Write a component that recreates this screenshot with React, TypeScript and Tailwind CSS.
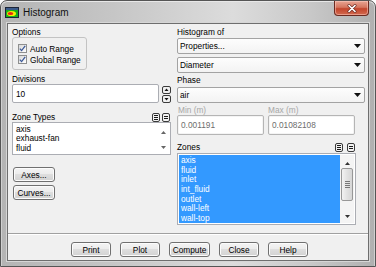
import React from "react";

const font = "font-['Liberation_Sans',Arial,sans-serif]";

function Check({ label }: { label: string }) {
  return (
    <div className="flex items-center h-[11px]">
      <div className="w-[9px] h-[9px] border border-[#8e8f8f] bg-[linear-gradient(135deg,#d8d8d8,#ffffff)] flex items-center justify-center">
        <svg width="7" height="7" viewBox="0 0 7 7">
          <path d="M0.8 3.6 L2.6 5.6 L6.2 0.9" stroke="#3b5999" strokeWidth="1.3" fill="none" />
        </svg>
      </div>
      <span className="ml-[3px] leading-[10px]">{label}</span>
    </div>
  );
}

function Dropdown({ text }: { text: string }) {
  return (
    <div className="h-[16px] border border-[#a3a3a3] rounded-[2px] bg-[linear-gradient(#fdfdfd,#f3f3f3)] flex items-center justify-between pl-[2px] pr-[3px]">
      <span className="leading-[10px]">{text}</span>
      <svg width="7" height="4" viewBox="0 0 7 4">
        <path d="M0 0 H7 L3.5 4 Z" fill="#111" />
      </svg>
    </div>
  );
}

function Btn({ children, className }: { children: React.ReactNode; className: string }) {
  return (
    <div
      className={
        "h-[15px] border border-[#707070] rounded-[3px] flex items-center justify-center leading-[10px] bg-[linear-gradient(#f4f4f4_0%,#ececec_45%,#dedede_50%,#d2d2d2_100%)] shadow-[inset_0_0_0_1px_#fcfcfc] " +
        className
      }
    >
      {children}
    </div>
  );
}

function SelIcon({ lines }: { lines: number }) {
  return (
    <svg width="8" height="9" viewBox="0 0 8 9">
      <rect x="0.5" y="0.5" width="7" height="8" rx="1.5" fill="#f2f2f2" stroke="#3a3a3a" />
      {lines === 3 ? (
        <path d="M2 2.5H6M2 4.5H6M2 6.5H6" stroke="#1a1a1a" strokeWidth="1" />
      ) : (
        <path d="M2 3.5H6M2 5.5H6" stroke="#1a1a1a" strokeWidth="1" />
      )}
    </svg>
  );
}

function Spin({ up }: { up: boolean }) {
  return (
    <svg width="9" height="8" viewBox="0 0 9 8">
      <rect x="0.5" y="0.5" width="8" height="7" rx="1.5" fill="#f0f0f0" stroke="#3a3a3a" />
      {up ? <path d="M2.5 5 H6.5 L4.5 2.6 Z" fill="#111" /> : <path d="M2.5 3 H6.5 L4.5 5.4 Z" fill="#111" />}
    </svg>
  );
}

function SmallArrow({ up, color }: { up: boolean; color: string }) {
  return (
    <svg width="5" height="3" viewBox="0 0 5 3">
      {up ? <path d="M0 3 H5 L2.5 0 Z" fill={color} /> : <path d="M0 0 H5 L2.5 3 Z" fill={color} />}
    </svg>
  );
}

export default function App() {
  const zones = ["axis", "fluid", "inlet", "int_fluid", "outlet", "wall-left", "wall-top"];
  const types = ["axis", "exhaust-fan", "fluid"];
  return (
    <div className={"w-[376px] h-[267px] " + font + " text-[8.3px] text-black"}>
      <div className="w-[376px] h-[267px] flex flex-col border border-[#555555] rounded-t-[7px] bg-[linear-gradient(90deg,#b4b4b4_0%,#c6c6c6_30%,#dcdcdc_62%,#c9c9c9_82%,#b0b0b0_100%)] shadow-[inset_0_1px_0_#e8e8e8,inset_1px_0_0_#d0d0d0,inset_-1px_0_0_#d0d0d0]">
        {/* title bar */}
        <div className="h-[22px] flex items-center">
          <div className="ml-[4px] mt-[1px]">
            <svg width="14" height="11" viewBox="0 0 14 11">
              <rect x="0" y="0" width="14" height="11" fill="#1c2436" />
              <rect x="1" y="1" width="12" height="2" fill="#3a5a8a" />
              <rect x="1" y="3" width="12" height="7" fill="#18b018" />
              <ellipse cx="6.5" cy="6.5" rx="4.5" ry="2.6" fill="#f4f000" />
              <ellipse cx="5.5" cy="6.5" rx="2.8" ry="1.6" fill="#e82810" />
            </svg>
          </div>
          <span className="ml-[4px] text-[10px] leading-[12px] mt-[1px] text-[#111]">Histogram</span>
          <div className="ml-auto mr-[6px] self-start w-[35px] h-[15px] rounded-b-[4px] border border-t-0 border-[#6b2a20] bg-[linear-gradient(#e8a593_0%,#d5765f_45%,#c3452c_55%,#d26a4f_100%)] flex items-center justify-center shadow-[inset_0_0_0_1px_rgba(255,210,200,0.5)]">
            <svg width="10" height="9" viewBox="0 0 10 9">
              <path d="M2 1.5 L8 7.5 M8 1.5 L2 7.5" stroke="#6b2a20" strokeWidth="3" strokeLinecap="round" />
              <path d="M2 1.5 L8 7.5 M8 1.5 L2 7.5" stroke="#ffffff" strokeWidth="1.7" strokeLinecap="round" />
            </svg>
          </div>
        </div>

        {/* content */}
        <div className="mx-[6px] h-[238px] border border-[#6e6e6e] bg-[#f0f0f0] flex flex-col shadow-[0_0_0_1px_#d6d6d6]">
          <div className="h-[209px] flex pl-[4px]">
            {/* left column */}
            <div className="w-[159px] flex flex-col">
              <div className="mt-[3px] h-[10px] leading-[10px]">Options</div>
              <div className="h-[33px] w-[75px] border border-[#c3c3c3] rounded-[3px] pt-[5px] pl-[5px] flex flex-col">
                <Check label="Auto Range" />
                <Check label="Global Range" />
              </div>
              <div className="mt-[4px] h-[10px] leading-[10px]">Divisions</div>
              <div className="h-[19px] flex">
                <div className="w-[148px] h-[19px] border border-[#abadb3] rounded-[2px] bg-white flex items-center pl-[3px] leading-[10px]">
                  10
                </div>
                <div className="ml-[3px] pt-[2px] flex flex-col gap-[1px]">
                  <Spin up={true} />
                  <Spin up={false} />
                </div>
              </div>
              <div className="mt-[9px] h-[10px] flex items-center">
                <span className="leading-[10px]">Zone Types</span>
                <div className="ml-auto flex gap-[2px] mr-[1px]">
                  <SelIcon lines={3} />
                  <SelIcon lines={2} />
                </div>
              </div>
              <div className="h-[33px] border border-[#abadb3] bg-white flex">
                <div className="flex-1 pl-[3px] pt-[2px] flex flex-col">
                  {types.map((t) => (
                    <div key={t} className="h-[9.3px] leading-[9.3px]">
                      {t}
                    </div>
                  ))}
                </div>
                <div className="w-[13px] flex flex-col items-center justify-between pt-[8px] pb-[5px]">
                  <SmallArrow up={true} color="#666" />
                  <SmallArrow up={false} color="#666" />
                </div>
              </div>
              <Btn className="mt-[12px] ml-[1px] w-[42px]">Axes...</Btn>
              <Btn className="mt-[3px] ml-[1px] w-[42px]">Curves...</Btn>
            </div>

            {/* right column */}
            <div className="ml-[6px] w-[188px] flex flex-col">
              <div className="mt-[3px] h-[10px] leading-[10px]">Histogram of</div>
              <div className="mt-[1px]">
                <Dropdown text="Properties..." />
              </div>
              <div className="mt-[3px]">
                <Dropdown text="Diameter" />
              </div>
              <div className="mt-[2px] h-[10px] leading-[10px]">Phase</div>
              <div className="mt-[2px]">
                <Dropdown text="air" />
              </div>
              <div className="mt-[2px] h-[10px] flex text-[#a7a7a7] leading-[10px]">
                <span className="w-[91px] pl-[1px]">Min (m)</span>
                <span>Max (m)</span>
              </div>
              <div className="h-[20px] flex gap-[4px]">
                <div className="w-[87px] h-[20px] border border-[#b5b5b5] rounded-[2px] bg-white shadow-[inset_0_0_0_1px_#f4f4f4] flex items-center pl-[3px] text-[#6d6d6d] leading-[10px]">
                  0.001191
                </div>
                <div className="w-[87px] h-[20px] border border-[#b5b5b5] rounded-[2px] bg-white shadow-[inset_0_0_0_1px_#f4f4f4] flex items-center pl-[3px] text-[#6d6d6d] leading-[10px]">
                  0.01082108
                </div>
              </div>
              <div className="mt-[7px] w-[179px] h-[10px] flex items-center">
                <span className="leading-[10px]">Zones</span>
                <div className="ml-auto flex gap-[4px] mr-[1px]">
                  <SelIcon lines={3} />
                  <SelIcon lines={2} />
                </div>
              </div>
              <div className="mt-[1px] w-[179px] h-[72px] border border-[#abadb3] bg-white flex p-[1px]">
                <div className="flex-1 bg-[#3399ff] text-white pl-[2px] pt-[1px] flex flex-col">
                  {zones.map((z) => (
                    <div key={z} className="h-[9.67px] leading-[9.67px]">
                      {z}
                    </div>
                  ))}
                </div>
                <div className="w-[14px] bg-[#f4f4f4] flex flex-col items-center pt-[7px] pb-[5px]">
                  <SmallArrow up={true} color="#333" />
                  <div className="mt-[3px] w-[12px] h-[33px] rounded-[2px] border border-[#979797] bg-[linear-gradient(90deg,#f2f2f2,#e2e2e2_50%,#d6d6d6)] flex flex-col items-center justify-center gap-[1px]">
                    <div className="w-[5px] h-px bg-[#777]" />
                    <div className="w-[5px] h-px bg-[#777]" />
                    <div className="w-[5px] h-px bg-[#777]" />
                    <div className="w-[5px] h-px bg-[#777]" />
                  </div>
                  <div className="mt-auto">
                    <SmallArrow up={false} color="#333" />
                  </div>
                </div>
              </div>
            </div>
          </div>

          {/* footer */}
          <div className="h-px bg-[#a0a0a0]" />
          <div className="h-px bg-white" />
          <div className="pt-[7px] pl-[63px] flex gap-[9px]">
            <Btn className="w-[40px]">Print</Btn>
            <Btn className="w-[40px]">Plot</Btn>
            <Btn className="w-[41px]">Compute</Btn>
            <Btn className="w-[40px]">Close</Btn>
            <Btn className="w-[40px]">Help</Btn>
          </div>
        </div>
      </div>
    </div>
  );
}
